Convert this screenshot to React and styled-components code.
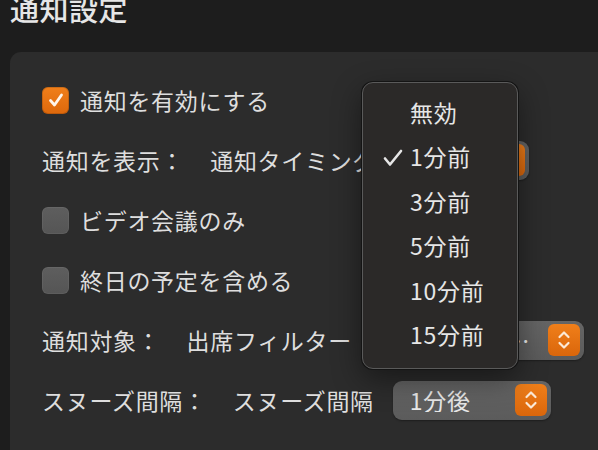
import React from 'react';
import styled, { createGlobalStyle } from 'styled-components';

const GlobalStyle = createGlobalStyle`
  html, body {
    margin: 0;
    padding: 0;
    background: #1d1d1d;
    overflow: hidden;
  }
  body {
    font-family: "Noto Sans CJK JP", "Noto Sans", sans-serif;
    color: #dedede;
  }
`;

const Page = styled.div`
  width: 598px;
  height: 450px;
  overflow: hidden;
  padding-left: 10px;
  box-sizing: border-box;
`;

const Title = styled.h1`
  margin: -6px 0 0 0;
  font-size: 29px;
  line-height: 29px;
  font-weight: 500;
  letter-spacing: 0.5px;
  color: #e6e6e6;
`;

const Panel = styled.div`
  position: relative;
  margin-top: 29px;
  width: 640px;
  height: 460px;
  box-sizing: border-box;
  padding: 28px 0 0 32px;
  background: #2c2c2c;
  border-radius: 11px;
  display: flex;
  flex-direction: column;
  gap: 20px;
`;

const Row = styled.div`
  display: flex;
  align-items: center;
  height: 40px;
  font-size: 23px;
  line-height: 1;
  letter-spacing: 0.7px;
  white-space: nowrap;
`;

const Box = styled.span`
  width: 27px;
  height: 27px;
  border-radius: 6px;
  flex: none;
  display: flex;
  align-items: center;
  justify-content: center;
  margin-right: 11px;
  background: ${p => (p.$on ? 'linear-gradient(#f07f1a, #dd680c)' : 'linear-gradient(#5e5e5e, #555555)')};
  box-shadow: inset 0 0 0 1px ${p => (p.$on ? 'rgba(0,0,0,0.15)' : 'rgba(255,255,255,0.05)')};
`;

const Label = styled.span`
  margin-right: ${p => p.$gap || 0}px;
`;

const Select = styled.div`
  width: ${p => p.$w}px;
  height: 39px;
  box-sizing: border-box;
  border-radius: 9px;
  background: linear-gradient(#656565, #5b5b5b);
  box-shadow: 0 1px 2px rgba(0, 0, 0, 0.35);
  display: flex;
  align-items: center;
  padding: 0 4px 0 17px;
`;

const Value = styled.span`
  flex: 1;
  min-width: 0;
  overflow: hidden;
  text-overflow: ellipsis;
  margin-right: ${p => p.$pad || 8}px;
  color: #e8e8e8;
`;

const Stepper = styled.span`
  width: 32px;
  height: 32px;
  flex: none;
  border-radius: 6px;
  background: linear-gradient(#f07f1a, #da660b);
  display: flex;
  align-items: center;
  justify-content: center;
`;

const Menu = styled.div`
  position: absolute;
  left: 352px;
  top: 30px;
  width: 156px;
  box-sizing: border-box;
  padding: 7px 0 11px;
  background: #2b2928;
  border: 1px solid #5a5a5a;
  border-radius: 11px;
  box-shadow: 0 0 0 1px #141414, 0 10px 30px rgba(0, 0, 0, 0.45);
`;

const Item = styled.div`
  position: relative;
  height: 44.5px;
  display: flex;
  align-items: center;
  padding-left: 47px;
  font-size: 23px;
  line-height: 1;
  letter-spacing: 0.7px;
  color: #e6e6e6;
`;

const Check = styled.svg`
  position: absolute;
  left: 20px;
  top: 14px;
`;

const StepIcon = () => (
  <svg width="14" height="22" viewBox="0 0 14 22" fill="none" stroke="#fbe9d6" strokeWidth="2.2" strokeLinecap="round" strokeLinejoin="round">
    <polyline points="2.5,8 7,3.5 11.5,8" />
    <polyline points="2.5,14 7,18.5 11.5,14" />
  </svg>
);

const Checkbox = ({ on, children }) => (
  <Row>
    <Box $on={on}>
      {on && (
        <svg width="18" height="18" viewBox="0 0 18 18" fill="none" stroke="#fff6ec" strokeWidth="2.8" strokeLinecap="round" strokeLinejoin="round">
          <polyline points="3.5,9.5 7.5,14 14.5,4" />
        </svg>
      )}
    </Box>
    <span>{children}</span>
  </Row>
);

const PopupRow = ({ label, sub, value, width, pad }) => (
  <Row>
    <Label $gap={26}>{label}</Label>
    <Label $gap={19}>{sub}</Label>
    <Select $w={width}>
      <Value $pad={pad}>{value}</Value>
      <Stepper>
        <StepIcon />
      </Stepper>
    </Select>
  </Row>
);

const options = ['無効', '1分前', '3分前', '5分前', '10分前', '15分前'];

export default function App() {
  return (
    <Page>
      <GlobalStyle />
      <Title>通知設定</Title>
      <Panel>
        <Checkbox on>通知を有効にする</Checkbox>
        <PopupRow label="通知を表示：" sub="通知タイミング" value="1分前" width={134} />
        <Checkbox>ビデオ会議のみ</Checkbox>
        <Checkbox>終日の予定を含める</Checkbox>
        <PopupRow label="通知対象：" sub="出席フィルター" value="承諾済みおよび未定の予定" width={213} pad={12} />
        <PopupRow label="スヌーズ間隔：" sub="スヌーズ間隔" value="1分後" width={158} />
        <Menu>
          {options.map(o => (
            <Item key={o}>
              {o === '1分前' && (
                <Check width="20" height="18" viewBox="0 0 20 18" fill="none" stroke="#e6e6e6" strokeWidth="2.6" strokeLinecap="round" strokeLinejoin="round">
                  <polyline points="2,9.5 7,15.5 18,2" />
                </Check>
              )}
              {o}
            </Item>
          ))}
        </Menu>
      </Panel>
    </Page>
  );
}
